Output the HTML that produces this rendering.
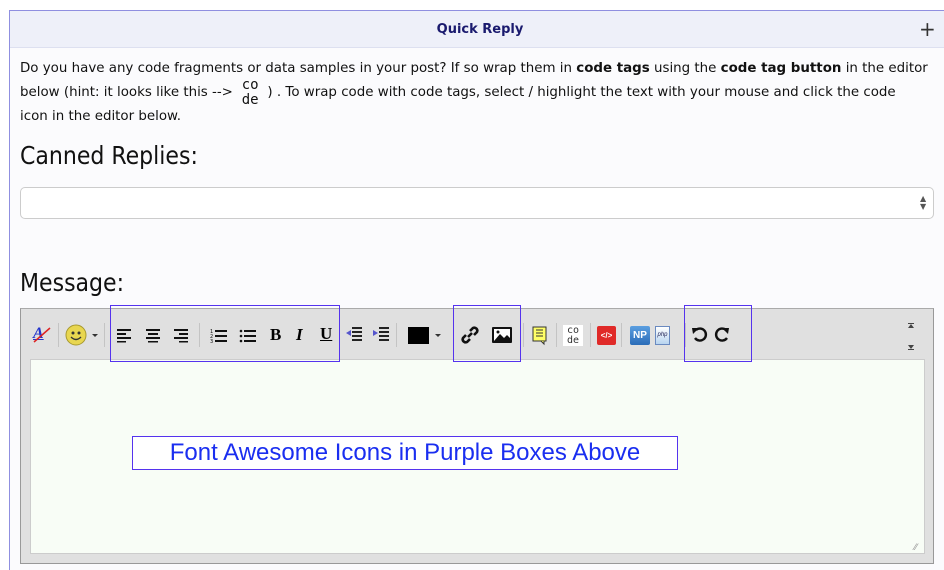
<!DOCTYPE html>
<html><head><meta charset="utf-8"><style>
*{box-sizing:border-box;margin:0;padding:0}
html,body{width:944px;height:570px;overflow:hidden}
body{background:#fff;font-family:"DejaVu Sans",Verdana,sans-serif;position:relative}
.abs{position:absolute}
.panel{left:9px;top:10px;width:960px;height:570px;border:1px solid #8f8fe0;background:#fbfbfd}
.hdr{left:10px;top:11px;width:940px;height:37px;background:#eef0f9;border-bottom:1px solid #dde0f0;text-align:center;font:bold 13px "DejaVu Sans",sans-serif;color:#1a1a6e;line-height:37px}
.txt{left:20px;top:57px;width:920px;font-size:13.4px;line-height:24px;color:#111;font-family:"DejaVu Sans",sans-serif;white-space:nowrap}
.h{font-family:"DejaVu Sans Condensed","DejaVu Sans",sans-serif;font-size:24.5px;color:#111}
.sel{left:20px;top:187px;width:914px;height:32px;border:1px solid #ccc;border-radius:5px;background:#fff}
.ed{left:20px;top:308px;width:914px;height:256px;background:#e0e0e0;border:1px solid #999;border-top:1px solid #aaa}
.ta{left:30px;top:359px;width:895px;height:195px;background:#f8fdf6;border:1px solid #ccc}
.pb{border:1px solid #5533ee}
.sep{width:1px;height:24px;background:#c4c4c4;top:323px}
.ic{top:323px}
.cd{display:inline-block;width:26px;height:10px;position:relative}
.cd span{position:absolute;left:0;top:-8px;width:26px;text-align:center;font:14px/15px 'DejaVu Sans Mono',monospace}
</style></head><body>
<div class="abs panel"></div>
<div class="abs hdr">Quick Reply</div>
<div class="abs" style="left:919px;top:19px;font-size:20px;color:#333;line-height:20px">+</div>
<div class="abs txt">Do you have any code fragments or data samples in your post? If so wrap them in <b>code tags</b> using the <b>code tag button</b> in the editor<br>below (hint: it looks like this --&gt; <span class="cd"><span>co<br>de</span></span> ) . To wrap code with code tags, select / highlight the text with your mouse and click the code<br>icon in the editor below.</div>
<div class="abs h" style="left:20px;top:141px">Canned Replies:</div>
<div class="abs sel"></div>
<div class="abs" style="left:920px;top:195px;font-size:8px;line-height:8px;color:#555">▲<br>▼</div>
<div class="abs h" style="left:20px;top:268px">Message:</div>
<div class="abs ed"></div>
<div class="abs ta"></div>
<div class="abs ic" style="left:33px;top:325px;font:bold italic 16px 'Liberation Serif',serif;color:#2233cc;text-decoration:underline">A</div>
<svg class="abs" style="left:32px;top:326px" width="20" height="18"><line x1="2" y1="16" x2="18" y2="2" stroke="#d22" stroke-width="1.5"/></svg>
<div class="sep abs" style="left:58px"></div>
<svg class="abs" style="left:65px;top:324px" width="22" height="22"><circle cx="11" cy="11" r="10" fill="#e8d650" stroke="#a89a30"/><circle cx="8" cy="9" r="1.5" fill="#333"/><circle cx="14" cy="9" r="1.5" fill="#333"/><path d="M6 13 Q11 18 16 13" stroke="#333" fill="none" stroke-width="1.3"/></svg>
<div class="abs" style="left:92px;top:334px;border:3px solid transparent;border-top:3px solid #333"></div>
<div class="sep abs" style="left:104px"></div>
<svg class="abs" style="left:117px;top:327px" width="80" height="16" fill="#111">
<rect x="0" y="2" width="14" height="2"/><rect x="0" y="6" width="9" height="2"/><rect x="0" y="10" width="14" height="2"/><rect x="0" y="14" width="9" height="1.5"/>
<rect x="29" y="2" width="14" height="2"/><rect x="31" y="6" width="10" height="2"/><rect x="29" y="10" width="14" height="2"/><rect x="31" y="14" width="10" height="1.5"/>
<rect x="57" y="2" width="14" height="2"/><rect x="62" y="6" width="9" height="2"/><rect x="57" y="10" width="14" height="2"/><rect x="62" y="14" width="9" height="1.5"/></svg>
<div class="sep abs" style="left:199px"></div>
<svg class="abs" style="left:210px;top:327px" width="50" height="16" fill="#111">
<text x="0" y="6" font-size="5">1</text><text x="0" y="11" font-size="5">2</text><text x="0" y="16" font-size="5">3</text>
<rect x="5" y="3" width="12" height="2"/><rect x="5" y="8" width="12" height="2"/><rect x="5" y="13" width="12" height="2"/>
<circle cx="31" cy="4" r="1.3"/><circle cx="31" cy="9" r="1.3"/><circle cx="31" cy="14" r="1.3"/>
<rect x="34" y="3" width="12" height="2"/><rect x="34" y="8" width="12" height="2"/><rect x="34" y="13" width="12" height="2"/></svg>
<div class="abs" style="left:270px;top:325px;font:bold 17px 'Liberation Serif',serif">B</div>
<div class="abs" style="left:296px;top:325px;font:bold italic 17px 'Liberation Serif',serif">I</div>
<div class="abs" style="left:320px;top:324px;font:bold 17px 'Liberation Serif',serif;text-decoration:underline">U</div>
<svg class="abs" style="left:346px;top:325px" width="50" height="20" fill="#222">
<rect x="6" y="2" width="10" height="2"/><rect x="6" y="6" width="10" height="2"/><rect x="6" y="10" width="10" height="2"/><rect x="6" y="14" width="10" height="2"/><path d="M0 8 L5 5 L5 11Z" fill="#55c"/>
<rect x="33" y="2" width="10" height="2"/><rect x="33" y="6" width="10" height="2"/><rect x="33" y="10" width="10" height="2"/><rect x="33" y="14" width="10" height="2"/><path d="M32 8 L27 5 L27 11Z" fill="#55c"/></svg>
<div class="sep abs" style="left:396px"></div>
<div class="abs" style="left:408px;top:327px;width:21px;height:17px;background:#000"></div>
<div class="abs" style="left:435px;top:334px;border:3px solid transparent;border-top:3px solid #333"></div>
<svg class="abs" style="left:460px;top:325px" width="20" height="20"><path d="M8 12 L12 8 M6 10 L3 13 A3 3 0 0 0 7 17 L10 14 M10 6 L13 3 A3 3 0 0 1 17 7 L14 10" stroke="#111" stroke-width="2.6" fill="none"/></svg>
<svg class="abs" style="left:491px;top:326px" width="22" height="18"><rect x="1" y="1" width="20" height="16" fill="#111" rx="1"/><rect x="3" y="3" width="16" height="12" fill="#fff"/><path d="M3 15 L9 8 L13 12 L16 9 L19 12 L19 15Z" fill="#111"/><circle cx="7" cy="6" r="1.5" fill="#111"/></svg>
<div class="sep abs" style="left:523px"></div>
<svg class="abs" style="left:532px;top:326px" width="16" height="20"><rect x="1" y="1" width="13" height="14" fill="#ffff66" stroke="#333"/><path d="M4 4h7M4 7h7M4 10h7" stroke="#333"/><path d="M9 15 L12 18 L12 15" fill="#ff6" stroke="#333"/></svg>
<div class="sep abs" style="left:556px"></div>
<div class="abs" style="left:563px;top:325px;width:20px;height:21px;background:#fff;font:10px/10px 'DejaVu Sans Mono',monospace;text-align:center;color:#333;padding-top:1px">co<br>de</div>
<div class="sep abs" style="left:590px"></div>
<div class="abs" style="left:597px;top:326px;width:19px;height:19px;background:#e02a28;border-radius:2px;color:#fff;font:bold 8px/19px sans-serif;text-align:center">&lt;/&gt;</div>
<div class="sep abs" style="left:621px"></div>
<div class="abs" style="left:630px;top:326px;width:20px;height:19px;background:linear-gradient(#5a9ee0,#2a6cb8);border-radius:2px;color:#fff;font:bold 10px/19px sans-serif;text-align:center">NP</div>
<div class="abs" style="left:655px;top:326px;width:15px;height:19px;background:linear-gradient(#fff,#b8d4f0);border:1px solid #6a8ac0;font:italic 6px/17px sans-serif;text-align:center;color:#225">php</div>
<div class="sep abs" style="left:685px"></div>
<svg class="abs" style="left:691px;top:325px" width="50" height="20"><path d="M5 5 A6 6 0 1 1 4 13" stroke="#111" stroke-width="2.4" fill="none"/><path d="M1 3 L8 3 L2 9Z" fill="#111"/><path d="M45 5 A6 6 0 1 0 46 13" stroke="#111" stroke-width="2.4" fill="none" transform="translate(-10 0)"/><path d="M39 3 L32 3 L38 9Z" fill="#111" transform="translate(-1 0)"/></svg>
<svg class="abs" style="left:906px;top:322px" width="10" height="30" fill="#444"><rect x="2" y="1" width="6" height="1"/><path d="M5 2 L2 6 L8 6Z"/><rect x="2" y="27" width="6" height="1"/><path d="M5 27 L2 23 L8 23Z"/></svg>
<div class="abs pb" style="left:110px;top:305px;width:230px;height:57px"></div>
<div class="abs pb" style="left:453px;top:305px;width:68px;height:57px"></div>
<div class="abs pb" style="left:684px;top:305px;width:68px;height:57px"></div>
<div class="abs pb" style="left:132px;top:436px;width:546px;height:34px;background:#fff;text-align:center;font:24px/32px 'Liberation Sans',Arial,sans-serif;color:#1a2ef0">Font Awesome Icons in Purple Boxes Above</div>
<div class="abs" style="left:914px;top:543px;font-size:9px;color:#999">⁄⁄</div>
</body></html>
